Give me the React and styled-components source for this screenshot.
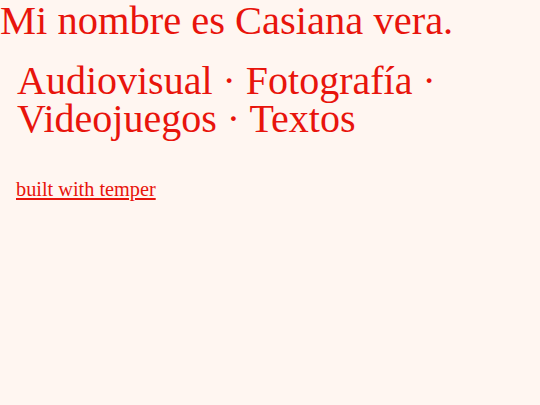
import React from 'react';
import styled, { createGlobalStyle } from 'styled-components';

const GlobalStyle = createGlobalStyle`
  html, body {
    margin: 0;
    padding: 0;
    background: #fff6f1;
  }
  body {
    font-family: "Liberation Serif", "Times New Roman", serif;
    color: #e8140c;
  }
`;

const Page = styled.main`
  display: flex;
  flex-direction: column;
  min-height: 405px;
`;

const Title = styled.h1`
  margin: 0;
  padding-top: 1px;
  font-size: 40.5px;
  font-weight: normal;
  line-height: 40px;
`;

const Tagline = styled.p`
  margin: 20.5px 0 0 17px;
  font-size: 40px;
  line-height: 38px;
  max-width: 470px;
`;

const Footer = styled.p`
  margin: 40px 0 0 16px;
  font-size: 20.3px;

  a {
    color: #e8140c;
  }
`;

export default function App() {
  return (
    <>
      <GlobalStyle />
      <Page>
        <Title>Mi nombre es Casiana vera.</Title>
        <Tagline>Audiovisual · Fotografía · Videojuegos · Textos</Tagline>
        <Footer>
          <a href="#">built with temper</a>
        </Footer>
      </Page>
    </>
  );
}
